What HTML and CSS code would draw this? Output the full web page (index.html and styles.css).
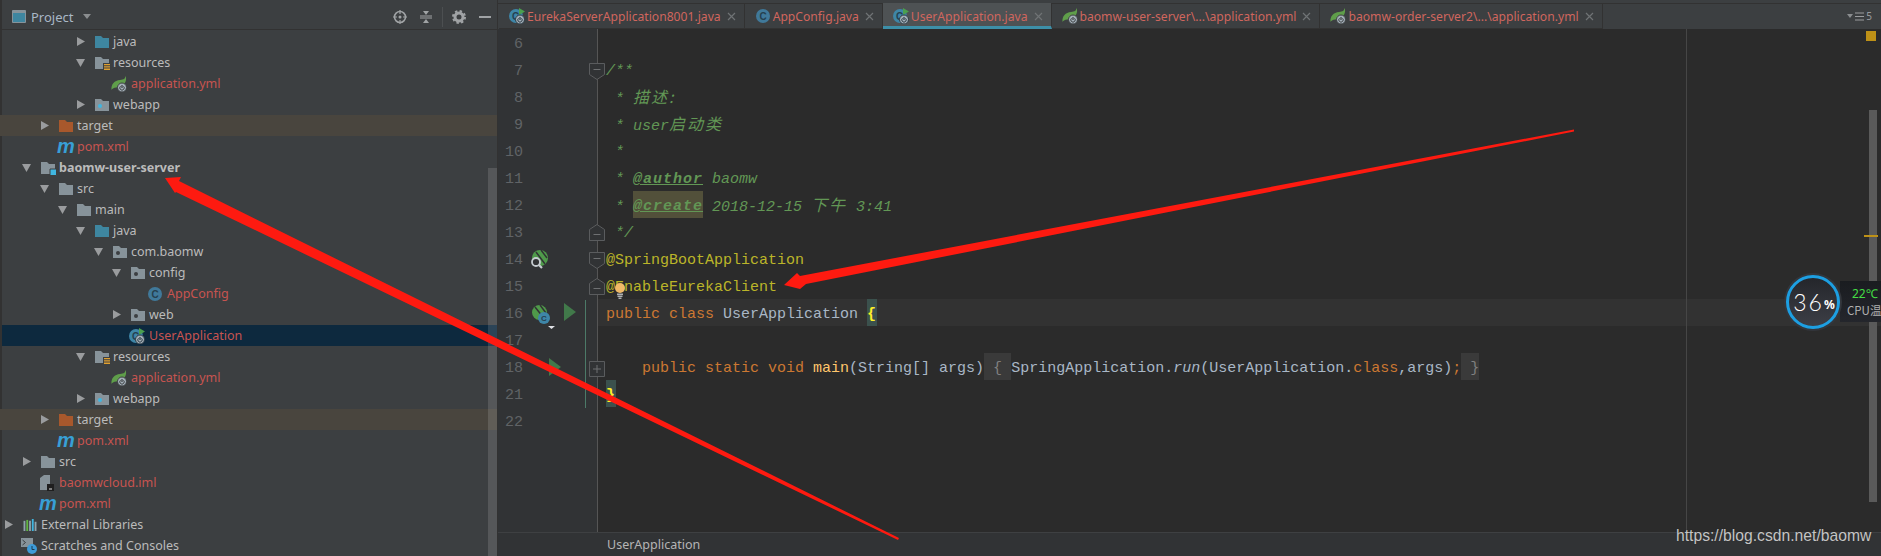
FILE: index.html
```html
<!DOCTYPE html>
<html lang="en">
<head>
<meta charset="utf-8">
<title>UserApplication.java</title>
<link rel="stylesheet" href="styles.css">
</head>
<body>
<svg class="defs" width="0" height="0" aria-hidden="true">
  <defs>
    <symbol id="f-gray" viewBox="0 0 14 12"><path d="M0 0h6l2 2h6v10H0z" fill="#87939a"/></symbol>
    <symbol id="f-blue" viewBox="0 0 14 12"><path d="M0 0h6l2 2h6v10H0z" fill="#3e86a0"/></symbol>
    <symbol id="f-orange" viewBox="0 0 14 12"><path d="M0 0h6l2 2h6v10H0z" fill="#a8582c"/></symbol>
    <symbol id="f-pkg" viewBox="0 0 14 12"><path d="M0 0h6l2 2h6v10H0z" fill="#87939a"/><circle cx="5" cy="7" r="2" fill="#3c3f41"/></symbol>
    <symbol id="f-web" viewBox="0 0 14 12"><path d="M0 0h6l2 2h6v10H0z" fill="#87939a"/><circle cx="5" cy="7" r="2" fill="#40b6e0"/></symbol>
    <symbol id="f-res" viewBox="0 0 16 14"><path d="M0 0h6l2 2h6v10H0z" fill="#87939a"/><path d="M8 6h8v8H8z" fill="#3c3f41"/><path d="M9 7h6v1.300H9zM9 9.300h6v1.300H9zM9 11.600h6v1.300H9z" fill="#e0a030"/></symbol>
    <symbol id="f-mod" viewBox="0 0 16 14"><path d="M0 0h6l2 2h6v10H0z" fill="#87939a"/><path d="M9 7h6.500v6.500H9z" fill="#40b6e0" stroke="#3c3f41"/></symbol>
    <symbol id="spring" viewBox="0 0 16 16"><path d="M14.500 0C14 3 13 3.500 9 4 3.500 4.500 0 8 .5 14c.5-1 1.500-1.800 3-2.300C8 11 14 10 15 4c.2-1.500 0-3-.5-4z" fill="#5f9e4a"/><circle cx="11" cy="11.500" r="4.500" fill="#a3afb8" stroke="#3c3f41"/><path d="M11 9v3" stroke="#3c3f41" stroke-width="1.200"/><path d="M9.500 10.300a2.200 2.200 0 1 0 3 0" fill="none" stroke="#3c3f41"/></symbol>
    <symbol id="klass" viewBox="0 0 16 16"><circle cx="8" cy="8" r="7" fill="#40799a"/><text x="8" y="11.500" class="svg-c">C</text></symbol>
    <symbol id="app" viewBox="0 0 16 16"><circle cx="7" cy="8" r="7" fill="#3e86a8"/><text x="6.500" y="11.500" class="svg-c">C</text><path d="M10 0l6 3.500-6 3.500z" fill="#4ba04f"/><circle cx="11" cy="11.500" r="4.500" fill="#a3afb8" stroke="#2b3a44"/><path d="M11 9v3" stroke="#2b3a44" stroke-width="1.200"/><path d="M9.500 10.300a2.200 2.200 0 1 0 3 0" fill="none" stroke="#2b3a44"/></symbol>
    <symbol id="iml" viewBox="0 0 14 16"><path d="M0 3l4-3h6v10H7v5H0z" fill="#87939a"/><path d="M7 9h7v7H7z" fill="#1f1f1f"/><path d="M9 14h3" stroke="#ddd"/></symbol>
    <symbol id="libs" viewBox="0 0 14 13"><path d="M0 2h2v11H0z" fill="#8fa3ad"/><path d="M3 1h2v12H3z" fill="#62b543"/><path d="M6 2h2v11H6z" fill="#8fa3ad"/><path d="M9 0h2v13H9z" fill="#40b6e0"/><path d="M12 3h2v10h-2z" fill="#8fa3ad"/></symbol>
    <symbol id="scratch" viewBox="0 0 16 16"><path d="M0 0h12v9H0z" fill="#87939a"/><path d="M1.500 2l3 2.500-3 2.500" fill="none" stroke="#3c3f41"/><circle cx="11" cy="11" r="5" fill="#3d9bd8"/><path d="M11 8v3.500h2.500" fill="none" stroke="#1b3a50"/></symbol>
    <symbol id="close" viewBox="0 0 9 9"><path d="M1 1l7 7M8 1L1 8" stroke="#6f7375" stroke-width="1.200" fill="none"/></symbol>
    <symbol id="right" viewBox="0 0 8 9"><path d="M0 0l8 4.500L0 9z" fill="#9a9c9e"/></symbol>
    <symbol id="down" viewBox="0 0 9 8"><path d="M0 0h9L4.500 8z" fill="#9a9c9e"/></symbol>
    <symbol id="fold-open" viewBox="0 0 16 17"><path d="M.5.500h15v11l-7.500 5-7.500-5z" fill="#313335" stroke="#5a5c5e"/><path d="M4.500 6.500h7" stroke="#6e7072"/></symbol>
    <symbol id="fold-end" viewBox="0 0 16 17"><path d="M.5 16.500h15v-11L8 .5l-7.500 5z" fill="#313335" stroke="#5a5c5e"/><path d="M4.500 10.500h7" stroke="#6e7072"/></symbol>
    <symbol id="fold-plus" viewBox="0 0 16 16"><path d="M.5.500h15v15H.5z" fill="#313335" stroke="#5a5c5e"/><path d="M4 8h8M8 4v8" stroke="#6e7072"/></symbol>
    <symbol id="run" viewBox="0 0 12 18"><path d="M0 0l12 9-12 9z" fill="#41794a"/></symbol>
  </defs>
</svg>
<div class="app">
  <aside class="sidebar">
    <header class="side-head">
      <svg class="head-icon" width="14" height="13" viewBox="0 0 14 13"><path d="M.5.500h13v12H.5z" fill="#3e86a0" stroke="#87939a"/><path d="M1 1h12v2H1z" fill="#87939a"/></svg>
      <span class="head-title">Project</span>
      <svg class="head-caret" width="8" height="5" viewBox="0 0 8 5"><path d="M0 0h8L4 5z" fill="#8a8d8f"/></svg>
      <svg class="head-tool first" width="14" height="14" viewBox="0 0 14 14"><circle cx="7" cy="7" r="5.500" fill="none" stroke="#a0a3a5" stroke-width="1.600"/><circle cx="7" cy="7" r="1.500" fill="#a0a3a5"/><path d="M7 0v4M7 10v4M0 7h4M10 7h4" stroke="#a0a3a5" stroke-width="1.200"/></svg>
      <svg class="head-tool" width="12" height="14" viewBox="0 0 12 14"><path d="M0 6h12M0 8h12" stroke="#a0a3a5"/><path d="M3 1h6L6 5zM3 13h6l-3-4z" fill="#a0a3a5"/></svg>
      <span class="head-sep"></span>
      <svg class="head-tool" width="14" height="14" viewBox="0 0 14 14"><circle cx="7" cy="7" r="4" fill="none" stroke="#a0a3a5" stroke-width="3"/><circle cx="7" cy="7" r="6" fill="none" stroke="#a0a3a5" stroke-width="2" stroke-dasharray="2.400 2.300"/></svg>
      <span class="head-min"></span>
    </header>
    <div class="tree">
      <div class="row d4"><svg class="arrow"><use href="#right"/></svg><svg class="ic"><use href="#f-blue"/></svg><span>java</span></div>
      <div class="row d4"><svg class="arrow dn"><use href="#down"/></svg><svg class="ic wide"><use href="#f-res"/></svg><span>resources</span></div>
      <div class="row d5 leaf"><svg class="ic file"><use href="#spring"/></svg><span class="red">application.yml</span></div>
      <div class="row d4"><svg class="arrow"><use href="#right"/></svg><svg class="ic"><use href="#f-web"/></svg><span>webapp</span></div>
      <div class="row d2 excl"><svg class="arrow"><use href="#right"/></svg><svg class="ic"><use href="#f-orange"/></svg><span>target</span></div>
      <div class="row d2 leaf"><span class="maven">m</span><span class="red">pom.xml</span></div>
      <div class="row d1"><svg class="arrow dn"><use href="#down"/></svg><svg class="ic wide"><use href="#f-mod"/></svg><b>baomw-user-server</b></div>
      <div class="row d2"><svg class="arrow dn"><use href="#down"/></svg><svg class="ic"><use href="#f-gray"/></svg><span>src</span></div>
      <div class="row d3"><svg class="arrow dn"><use href="#down"/></svg><svg class="ic"><use href="#f-gray"/></svg><span>main</span></div>
      <div class="row d4"><svg class="arrow dn"><use href="#down"/></svg><svg class="ic"><use href="#f-blue"/></svg><span>java</span></div>
      <div class="row d5"><svg class="arrow dn"><use href="#down"/></svg><svg class="ic"><use href="#f-pkg"/></svg><span>com.baomw</span></div>
      <div class="row d6"><svg class="arrow dn"><use href="#down"/></svg><svg class="ic"><use href="#f-pkg"/></svg><span>config</span></div>
      <div class="row d7 leaf"><svg class="ic file"><use href="#klass"/></svg><span class="red">AppConfig</span></div>
      <div class="row d6"><svg class="arrow"><use href="#right"/></svg><svg class="ic"><use href="#f-pkg"/></svg><span>web</span></div>
      <div class="row d6 leaf sel"><svg class="ic file"><use href="#app"/></svg><span class="red">UserApplication</span></div>
      <div class="row d4"><svg class="arrow dn"><use href="#down"/></svg><svg class="ic wide"><use href="#f-res"/></svg><span>resources</span></div>
      <div class="row d5 leaf"><svg class="ic file"><use href="#spring"/></svg><span class="red">application.yml</span></div>
      <div class="row d4"><svg class="arrow"><use href="#right"/></svg><svg class="ic"><use href="#f-web"/></svg><span>webapp</span></div>
      <div class="row d2 excl"><svg class="arrow"><use href="#right"/></svg><svg class="ic"><use href="#f-orange"/></svg><span>target</span></div>
      <div class="row d2 leaf"><span class="maven">m</span><span class="red">pom.xml</span></div>
      <div class="row d1"><svg class="arrow"><use href="#right"/></svg><svg class="ic"><use href="#f-gray"/></svg><span>src</span></div>
      <div class="row d1 leaf"><svg class="ic file"><use href="#iml"/></svg><span class="red">baomwcloud.iml</span></div>
      <div class="row d1 leaf"><span class="maven">m</span><span class="red">pom.xml</span></div>
      <div class="row d0"><svg class="arrow"><use href="#right"/></svg><svg class="ic"><use href="#libs"/></svg><span>External Libraries</span></div>
      <div class="row d0 leaf"><svg class="ic file"><use href="#scratch"/></svg><span>Scratches and Consoles</span></div>
    </div>
    <div class="side-thumb"></div>
  </aside>

  <main class="editor">
    <nav class="tabs">
      <div class="tab"><svg class="tab-ic"><use href="#app"/></svg><span>EurekaServerApplication8001.java</span><svg class="tab-x"><use href="#close"/></svg></div>
      <div class="tab"><svg class="tab-ic"><use href="#klass"/></svg><span>AppConfig.java</span><svg class="tab-x"><use href="#close"/></svg></div>
      <div class="tab active"><svg class="tab-ic"><use href="#app"/></svg><span>UserApplication.java</span><svg class="tab-x"><use href="#close"/></svg></div>
      <div class="tab"><svg class="tab-ic"><use href="#spring"/></svg><span>baomw-user-server\...\application.yml</span><svg class="tab-x"><use href="#close"/></svg></div>
      <div class="tab"><svg class="tab-ic"><use href="#spring"/></svg><span>baomw-order-server2\...\application.yml</span><svg class="tab-x"><use href="#close"/></svg></div>
      <div class="tab-count"><svg width="6" height="4" viewBox="0 0 6 4"><path d="M0 0h6L3 4z" fill="#8a8d8f"/></svg><svg width="9" height="9" viewBox="0 0 9 9"><path d="M0 1h9M0 4.500h9M0 8h9" stroke="#9a9c9e" stroke-width="1.200"/></svg><span>5</span></div>
    </nav>
    <div class="body">
      <div class="gutter">
        <div class="gl"><span class="num">6</span></div>
        <div class="gl"><span class="num">7</span><svg class="fold"><use href="#fold-open"/></svg></div>
        <div class="gl"><span class="num">8</span></div>
        <div class="gl"><span class="num">9</span></div>
        <div class="gl"><span class="num">10</span></div>
        <div class="gl"><span class="num">11</span></div>
        <div class="gl"><span class="num">12</span></div>
        <div class="gl"><span class="num">13</span><svg class="fold up"><use href="#fold-end"/></svg></div>
        <div class="gl"><span class="num">14</span>
          <svg class="g-boot" width="19" height="19" viewBox="0 0 19 19"><circle cx="10" cy="8" r="8" fill="#4f9a4a"/><path d="M6 2l9 12M11 0l6 8" stroke="#313335" stroke-width="1.500"/><circle cx="6" cy="12" r="4" fill="#313335" stroke="#c5ccd0" stroke-width="1.800"/><path d="M9 15l3 3" stroke="#c5ccd0" stroke-width="2.200"/></svg>
          <svg class="fold"><use href="#fold-open"/></svg></div>
        <div class="gl"><span class="num">15</span><svg class="fold up2"><use href="#fold-end"/></svg></div>
        <div class="gl"><span class="num">16</span>
          <svg class="g-app" width="24" height="24" viewBox="0 0 24 24"><circle cx="7.500" cy="7.500" r="7.500" fill="#4f9a4a"/><path d="M3 2l8 10M8 0l6 8" stroke="#313335" stroke-width="1.500"/><circle cx="12" cy="13" r="6" fill="#3e86a8"/><text x="12" y="16" class="svg-c small">C</text><path d="M16 21h7l-3.500 3z" fill="#dfe1e5"/></svg>
          <svg class="g-run"><use href="#run"/></svg></div>
        <div class="gl"><span class="num">17</span></div>
        <div class="gl"><span class="num">18</span><svg class="g-run small"><use href="#run"/></svg><svg class="fold plus"><use href="#fold-plus"/></svg></div>
        <div class="gl"><span class="num">21</span></div>
        <div class="gl"><span class="num">22</span></div>
        <span class="change"></span>
      </div>
      <div class="code">
        <div class="ln"></div>
        <div class="ln cm">/**</div>
        <div class="ln cm"> * <span class="cjk">描述:</span></div>
        <div class="ln cm"> * user<span class="cjk">启动类</span></div>
        <div class="ln cm"> *</div>
        <div class="ln cm"> * <span class="tag">@author</span> baomw</div>
        <div class="ln cm"> * <span class="tag hit">@create</span> 2018-12-15 <span class="cjk">下午</span> 3:41</div>
        <div class="ln cm"> */</div>
        <div class="ln an">@SpringBootApplication</div>
        <div class="ln an">@EnableEurekaClient</div>
        <div class="ln cur"><span class="kw">public class</span> UserApplication <span class="brace">{</span></div>
        <div class="ln"></div>
        <div class="ln">    <span class="kw">public static void</span> <span class="fn">main</span>(String[] args)<span class="fd"> { </span>SpringApplication.<i>run</i>(UserApplication.<span class="kw">class</span>,args)<span class="kw">;</span><span class="fd"> }</span></div>
        <div class="ln"><span class="brace">}</span></div>
        <div class="ln"></div>
        <span class="margin"></span>
        <span class="stripe-top"></span>
        <span class="thumb"></span>
        <span class="stripe-tick"></span>
        <svg class="bulb" width="10" height="16" viewBox="0 0 10 16"><circle cx="5" cy="5" r="5" fill="#f0b968"/><path d="M2 10.500h6v1.500H2zM2.500 12.500h5V14h-5zM3.500 14.500h3V16h-3z" fill="#aeb0b2"/></svg>
      </div>
    </div>
    <footer class="crumb">UserApplication</footer>
  </main>

  <div class="cpu">
    <div class="cpu-panel"><span class="temp">22℃</span><span class="cpu-label">CPU温</span></div>
    <div class="dial"><span class="pct">36</span><span class="sign">%</span></div>
  </div>
  <div class="mark">https://blog.csdn.net/baomw</div>
  <svg class="ink" width="1881" height="556" viewBox="0 0 1881 556" aria-hidden="true">
    <path d="M784 285L797 273L800 276L1574 129.500L1574 131.500L806 284L800 289Z" fill="#fe1a10"/>
    <path d="M165 178L181 177L179 181L899 538L898 540L176 192L175 193Z" fill="#fe1a10"/>
  </svg>
</div>
</body>
</html>
```

FILE: styles.css
```css
* { box-sizing: border-box; }
html, body { margin: 0; padding: 0; height: 556px; overflow: hidden; background: #2b2b2b; }
.defs { position: absolute; }
.app {
  position: relative;
  display: flex;
  width: 1881px;
  height: 556px;
  overflow: hidden;
  font-family: "Noto Sans", "Noto Sans CJK SC", sans-serif;
  font-size: 12.5px;
  color: #bbbbbb;
}
.svg-c { font: bold 10px "Liberation Sans", sans-serif; fill: #25404f; text-anchor: middle; }
.svg-c.small { font-size: 8px; }

/* project tool window */
.sidebar {
  position: relative;
  flex: 0 0 498px;
  background: #3c3f41;
  border-left: 2px solid #323232;
  border-right: 1px solid #323232;
  display: flex;
  flex-direction: column;
}
.side-head {
  height: 30px;
  padding: 3px 6px 0 10px;
  display: flex;
  align-items: center;
  border-top: 1px solid #3c3f41;
  border-bottom: 1px solid #323232;
  box-shadow: inset 0 2px 0 #3c3f41;
}
.head-icon { margin-right: 5px; }
.head-title { font-size: 13px; color: #a9b7c6; }
.head-caret { margin-left: 10px; }
.head-tool { margin-left: 13px; }
.head-tool.first { margin-left: auto; }
.head-sep { width: 1px; height: 20px; background: #4c4f51; margin: 0 -4px 0 10px; }
.head-min { width: 12px; height: 2px; background: #a0a3a5; margin-left: 13px; }
.tree { display: flex; flex-direction: column; margin-top: 1px; }
.row { height: 21px; display: flex; align-items: center; white-space: nowrap; margin-left: -2px; padding-left: 2px; }
.row b { font-weight: 700; }
.d0 { padding-left: 5px; }
.d1 { padding-left: 23px; }
.d2 { padding-left: 41px; }
.d3 { padding-left: 59px; }
.d4 { padding-left: 77px; }
.d5 { padding-left: 95px; }
.d6 { padding-left: 113px; }
.d7 { padding-left: 131px; }
.row.leaf { margin-left: 0; }
.d0.leaf { padding-left: 19px; }
.d1.leaf { padding-left: 37px; }
.d2.leaf { padding-left: 55px; }
.d5.leaf { padding-left: 109px; }
.d6.leaf { padding-left: 127px; }
.d7.leaf { padding-left: 145px; }
.excl { background: #49453e; }
.sel { background: #0d293e; }
.red { color: #c75450; }
.arrow { width: 8px; height: 9px; margin-right: 10px; flex: none; }
.arrow.dn { width: 9px; height: 8px; margin-left: -1px; }
.ic { width: 14px; height: 12px; margin-right: 4px; flex: none; }
.ic.wide { width: 16px; height: 14px; margin-right: 2px; margin-top: 2px; }
.ic.file { width: 16px; height: 16px; margin-right: 4px; }
.maven {
  width: 16px;
  margin-right: 4px;
  font: italic bold 20px/21px "Liberation Sans", sans-serif;
  color: #389fd6;
  text-align: center;
}
.side-thumb {
  position: absolute;
  right: 0;
  top: 168px;
  bottom: 0;
  width: 9px;
  background: rgba(255, 255, 255, .13);
}

/* editor */
.editor { flex: 1; display: flex; flex-direction: column; min-width: 0; }
.tabs {
  height: 29px;
  padding-left: 1px;
  display: flex;
  background: #3c3f41;
  border-top: 3px solid #3c3f41;
  box-shadow: inset 0 1px 0 #323232;
  flex: none;
  font-size: 12.15px;
}
.tab {
  display: flex;
  align-items: center;
  padding: 1px 8px 0 10px;
  border-right: 1px solid #323232;
  border-bottom: 1px solid #323232;
  color: #d0665e;
  white-space: nowrap;
}
.tab.active { background: #4e5254; border-bottom: 3px solid #3d8fa8; padding-top: 3px; }
.tab-ic { width: 16px; height: 16px; margin-right: 2px; }
.tab-x { width: 9px; height: 9px; margin-left: 6px; }
.tab-count { margin-left: auto; margin-right: 9px; display: flex; align-items: center; gap: 2px; font-size: 10px; color: #9a9c9e; }
.body { flex: 1; display: flex; min-height: 0; }
.gutter {
  position: relative;
  flex: 0 0 100px;
  background: #313335;
  border-right: 1px solid #555555;
}
.gl { height: 27px; display: flex; align-items: flex-start; position: relative; }
.num {
  flex: 0 0 25px;
  text-align: right;
  font: 15px/32px "Liberation Mono", monospace;
  color: #606366;
}
.g-boot { margin: 5px 0 0 7px; }
.g-app { margin: 6px 0 0 9px; }
.g-run { width: 12px; height: 18px; margin: 4px 0 0 8px; }
.g-run.small { margin: 5px 0 0 26px; }
.fold { width: 16px; height: 17px; margin: 7px -8px 0 auto; z-index: 1; }
.fold.up { margin-top: 6px; }
.fold.up2 { margin-top: 6px; }
.fold.plus { height: 16px; margin-top: 8px; }
.change { position: absolute; left: 87px; top: 271px; width: 1px; height: 108px; background: #4c7a68; }
.code {
  position: relative;
  flex: 1;
  font: 15px/32px "Liberation Mono", "Noto Sans CJK SC", monospace;
  color: #a9b7c6;
}
.ln { height: 27px; padding-left: 8px; white-space: pre; }
.cur { background: #323232; }
.cm { color: #629755; font-style: italic; }
.an { color: #bbb529; }
.kw { color: #cc7832; }
.fn { color: #ffc66d; }
.brace { display: inline-block; height: 27px; background: #3b514d; color: #ffef28; font-weight: bold; width: 10px; margin-right: -1px; vertical-align: top; }
.fd { display: inline-block; height: 27px; background: #3a3a3a; color: #808080; vertical-align: top; }
.tag { font-weight: bold; letter-spacing: 1px; text-decoration: underline; }
.hit { display: inline-block; height: 27px; background: #52503a; vertical-align: top; }
.cjk { font-family: "Noto Sans CJK SC", sans-serif; font-size: 16px; letter-spacing: 2px; line-height: 27px; }
.margin { position: absolute; left: 1088px; top: 0; bottom: 0; width: 1px; background: #464646; }
.stripe-top { position: absolute; left: 1268px; top: 2px; width: 10px; height: 10px; background: #be9117; }
.thumb { position: absolute; left: 1271px; top: 81px; bottom: 30px; width: 8px; background: #5a5a5a; }
.stripe-tick { position: absolute; left: 1266px; top: 206px; width: 14px; height: 2px; background: #be9117; }
.bulb { position: absolute; left: 17px; top: 254px; }
.crumb {
  flex: 0 0 24px;
  background: #313335;
  border-top: 1px solid #3e4042;
  padding-left: 109px;
  line-height: 23px;
  color: #b5b5b5;
}

/* overlays */
.cpu { position: absolute; left: 1786px; top: 275px; width: 95px; height: 54px; }
.cpu-panel {
  position: absolute;
  left: 54px;
  top: 6px;
  width: 41px;
  height: 41px;
  background: linear-gradient(#1a1c20, #24262c);
  display: flex;
  flex-direction: column;
  padding-left: 7px;
  overflow: hidden;
  white-space: nowrap;
}
.temp { color: #44dd44; font-size: 12px; line-height: 16px; margin: 5px 0 0 5px; }
.cpu-label { color: #b0b0b0; font: 11.5px/16px "Noto Sans CJK SC", sans-serif; }
.dial {
  position: absolute;
  left: 0;
  top: 0;
  width: 54px;
  height: 54px;
  border-radius: 50%;
  background: linear-gradient(#24262b, #3c3e46);
  border: 3px solid #1d9fe2;
  box-shadow: 0 0 0 2px #33363c;
  display: flex;
  align-items: center;
  justify-content: center;
  color: #ffffff;
}
.pct { font: 300 23px/1 Lato, sans-serif; letter-spacing: 2px; margin-left: 2px; }
.sign { font: bold 12px/1 "Noto Sans", sans-serif; margin-top: 6px; }
.mark {
  position: absolute;
  left: 1676px;
  top: 525px;
  font: 15.700px/22px "Liberation Sans", sans-serif;
  color: #c4c4c4;
  text-shadow: 0 0 1px #222;
  white-space: nowrap;
}
.ink { position: absolute; left: 0; top: 0; pointer-events: none; }
```
